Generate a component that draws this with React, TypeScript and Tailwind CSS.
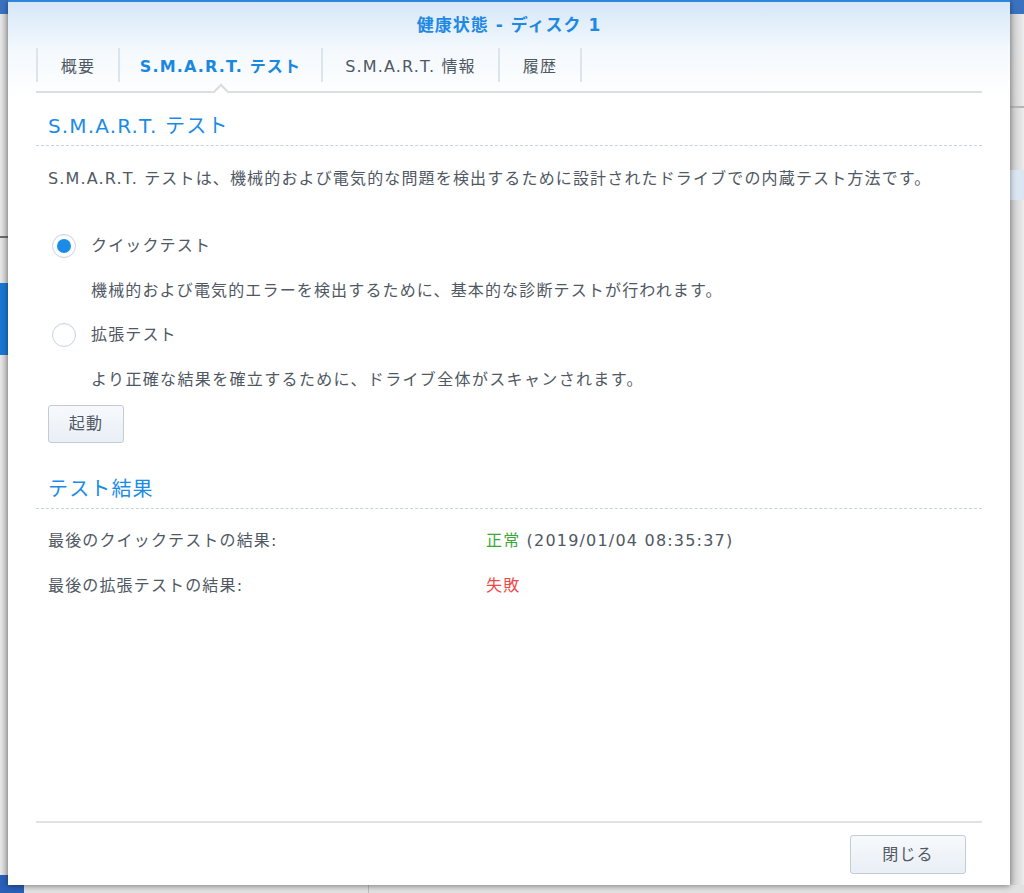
import React from "react";

const font = { fontFamily: '"DejaVu Sans", "Noto Sans CJK JP", sans-serif' };

function Radio({ checked }: { checked?: boolean }) {
  return (
    <div className="w-[24px] h-[24px] rounded-full border border-[#c9d3de] bg-white flex items-center justify-center shadow-[inset_0_1px_1px_rgba(0,0,0,0.04)]">
      {checked && <div className="w-[14px] h-[14px] rounded-full bg-[#1a8ce8]" />}
    </div>
  );
}

function Tab({ label, w, active }: { label: string; w: string; active?: boolean }) {
  return (
    <div className={`relative h-[34px] flex items-center justify-center pt-[3px] border-r-2 border-[#dce5ee] ${w}`}>
      <span className={active ? "text-[#1a87e0] font-bold" : "text-[#4f5863]"}>{label}</span>
      {active && (
        <div className="absolute left-1/2 top-[38px] -ml-[6px] w-[12px] h-[12px] rotate-45 bg-white border-l-2 border-t-2 border-[#dcdcdc]" />
      )}
    </div>
  );
}

export default function App() {
  return (
    <div
      className="relative w-[1024px] h-[893px] overflow-hidden bg-[#dcdcdc] text-[16px] tracking-[1.15px]"
      style={font}
    >
      {/* background desktop fragments */}
      <div className="absolute left-0 top-0 w-[8px] h-[893px] bg-gradient-to-r from-[#e8e8e8] to-[#c8c8c8]" />
      <div className="absolute left-0 top-0 w-[1024px] h-[14px] bg-[#3b72c0]" />
      <div className="absolute left-0 top-[236px] w-[8px] h-[2px] bg-[#6d6d6d]" />
      <div className="absolute left-0 top-[283px] w-[8px] h-[72px] bg-[#1b76d0]" />
      <div className="absolute left-0 top-[875px] w-[24px] h-[18px] bg-[#2a5fb8]" />
      <div className="absolute left-[1010px] top-[14px] w-[14px] h-[879px] bg-gradient-to-r from-[#c8c8c8] to-[#ececec]" />
      <div className="absolute left-[1010px] top-[106px] w-[14px] h-[2px] bg-[#b5b5b5]" />
      <div className="absolute left-[1010px] top-[170px] w-[14px] h-[30px] bg-[#dbe6f3]" />
      <div className="absolute left-[24px] top-[885px] w-[1000px] h-[8px] bg-[#e2e2e2]" />
      <div className="absolute left-[368px] top-[885px] w-[1px] h-[8px] bg-[#bdbdbd]" />

      {/* dialog */}
      <div className="absolute left-[8px] top-0 w-[1002px] h-[885px] bg-white flex flex-col shadow-[0_1px_6px_rgba(0,0,0,0.45)]">
        <div className="h-[100px] bg-gradient-to-b from-[#d6e7f8] via-[#f4f9fd] to-white border-t-2 border-[#2d86dc] flex flex-col">
          <div className="h-[46px] pt-[2px] flex items-center justify-center text-[17px] font-bold text-[#1f88e2] tracking-[1px]">
            健康状態 - ディスク 1
          </div>
          <div className="mx-7 h-[45px] border-b-2 border-[#dedede] relative">
            <div className="flex h-[34px]">
              <div className="w-[2px] h-[34px] bg-[#dce5ee]" />
              <Tab label="概要" w="w-[82px]" />
              <Tab label="S.M.A.R.T. テスト" w="w-[203px]" active />
              <Tab label="S.M.A.R.T. 情報" w="w-[177px]" />
              <Tab label="履歴" w="w-[82px]" />
            </div>
          </div>
        </div>

        <div className="mx-7 flex-1 flex flex-col -mt-[7px]">
          <div className="pl-3 pt-[19px] pb-[5px] border-b border-dashed border-[#c9d2dc]">
            <div className="h-[28px] leading-[28px] text-[20px] text-[#1a8ce6]">S.M.A.R.T. テスト</div>
          </div>
          <div className="pl-3 text-[#4f5863]">
            <div className="mt-[21px] h-[24px] leading-[24px]">
              S.M.A.R.T. テストは、機械的および電気的な問題を検出するために設計されたドライブでの内蔵テスト方法です。
            </div>
            <div className="mt-[43px] h-[24px] flex items-center pl-[4px] gap-[15px]">
              <Radio checked />
              <span>クイックテスト</span>
            </div>
            <div className="mt-[21px] pl-[43px] h-[24px] leading-[24px]">
              機械的および電気的エラーを検出するために、基本的な診断テストが行われます。
            </div>
            <div className="mt-[20px] h-[24px] flex items-center pl-[4px] gap-[15px]">
              <Radio />
              <span>拡張テスト</span>
            </div>
            <div className="mt-[21px] pl-[43px] h-[24px] leading-[24px] tracking-[1.35px]">
              より正確な結果を確立するために、ドライブ全体がスキャンされます。
            </div>
            <button className="mt-[13px] w-[76px] h-[38px] rounded-[3px] border border-[#c3ccd6] bg-gradient-to-b from-[#f7f9fc] to-[#e9eff6] text-[#4f5863] flex items-center justify-center">
              起動
            </button>
          </div>

          <div className="mt-[32px] pl-3 pb-[5px] border-b border-dashed border-[#c9d2dc]">
            <div className="h-[28px] leading-[28px] text-[20px] text-[#1a8ce6]">テスト結果</div>
          </div>
          <div className="pl-3 text-[#4f5863]">
            <div className="mt-[20px] h-[24px] leading-[24px] flex">
              <span className="w-[438px]">最後のクイックテストの結果:</span>
              <span>
                <span className="text-[#3aa935]">正常</span>{" "}
                <span className="tracking-[1.2px]">(2019/01/04 08:35:37)</span>
              </span>
            </div>
            <div className="mt-[21px] h-[24px] leading-[24px] flex">
              <span className="w-[438px]">最後の拡張テストの結果:</span>
              <span className="text-[#f04848]">失敗</span>
            </div>
          </div>

          <div className="flex-1" />
          <div className="border-t-2 border-[#e2e2e2] pt-[12px] pb-[11px] flex justify-end pr-[16px]">
            <button className="w-[116px] h-[39px] rounded-[3px] border border-[#c3ccd6] bg-gradient-to-b from-[#f7f9fc] to-[#e9eff6] text-[#4f5863] flex items-center justify-center">
              閉じる
            </button>
          </div>
        </div>
      </div>
    </div>
  );
}
